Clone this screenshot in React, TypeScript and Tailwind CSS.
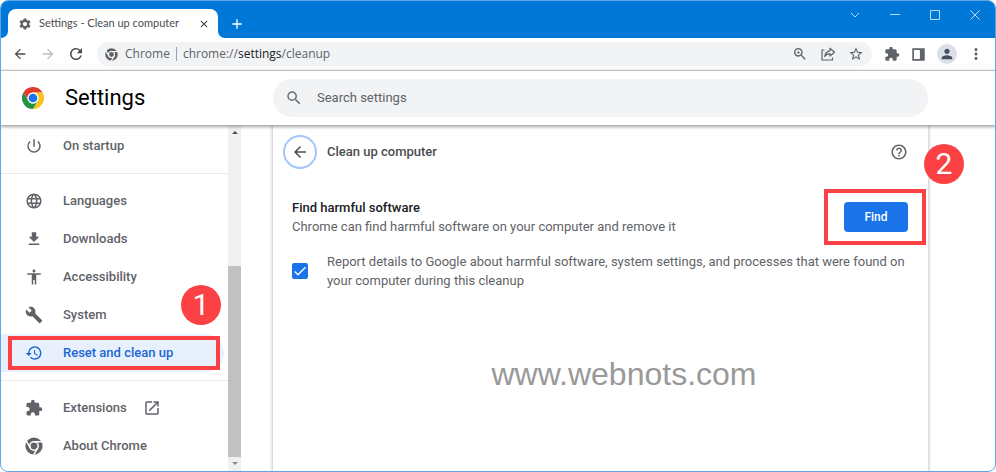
import React from 'react';
import type { IconType } from 'react-icons';
import {
  MdAccessibility,
  MdAdd,
  MdArrowBack,
  MdArrowForward,
  MdBuild,
  MdCheck,
  MdClose,
  MdExtension,
  MdFileDownload,
  MdHelpOutline,
  MdLanguage,
  MdMoreVert,
  MdOpenInNew,
  MdPerson,
  MdPowerSettingsNew,
  MdRefresh,
  MdRestore,
  MdSearch,
  MdSettings,
  MdStarBorder,
  MdZoomIn,
} from 'react-icons/md';

type IconProps = { className?: string };

function ChromeGlyph({ className }: IconProps) {
  return (
    <svg viewBox="0 0 24 24" className={className} aria-hidden="true">
      <circle cx="12" cy="12" r="11.5" fill="currentColor" />
      <circle cx="12" cy="12" r="5.6" fill="none" stroke="#fff" strokeWidth="2" />
      <g stroke="#fff" strokeWidth="2">
        <path d="M12 6.4h11" />
        <path d="M7.2 14.8L1.7 5.3" />
        <path d="M16.8 14.8l-5.5 9.5" />
      </g>
    </svg>
  );
}

function ChromeLogo({ className }: IconProps) {
  return (
    <svg viewBox="0 0 48 48" className={className} aria-hidden="true">
      <circle cx="24" cy="24" r="24" fill="#fff" />
      <path d="M3.2 12A24 24 0 0 1 44.8 12H24a12 12 0 0 0-10.4 18z" fill="#e33b2e" />
      <path d="M44.8 12A24 24 0 0 1 24 48l10.4-18A12 12 0 0 0 24 12z" fill="#fcc31e" />
      <path d="M24 48A24 24 0 0 1 3.2 12l10.4 18a12 12 0 0 0 20.8 0z" fill="#229342" />
      <circle cx="24" cy="24" r="12" fill="#fff" />
      <circle cx="24" cy="24" r="9.5" fill="#1a73e8" />
    </svg>
  );
}

function ShareIcon({ className }: IconProps) {
  return (
    <svg viewBox="0 0 16 16" className={className} fill="none" stroke="currentColor" strokeWidth="1.2" strokeLinejoin="round" aria-hidden="true">
      <path d="M4.5 4H2v10h10.5v-2.5" />
      <path d="M4.8 10.5C5.3 6.8 7 5 10 4.8V2.2L14.5 6.2 10 10V7.6C7.6 7.6 6 8.5 4.8 10.5z" />
    </svg>
  );
}

function SidePanelIcon({ className }: IconProps) {
  return (
    <svg viewBox="0 0 14 14" className={className} aria-hidden="true">
      <path d="M1.2 1.2h11.6v11.6H1.2z" fill="none" stroke="currentColor" strokeWidth="1.8" />
      <path d="M8.5 1H13v12H8.5z" fill="currentColor" />
    </svg>
  );
}

const windowControls = [
  { label: 'Search tabs', path: 'M1 3l4 4 4-4' },
  { label: 'Minimize', path: 'M0 4.5h10' },
  { label: 'Maximize', path: 'M.5.5h9v9h-9z' },
  { label: 'Close', path: 'M.5.5l9 9M9.5.5l-9 9' },
];

function TitleBar() {
  return (
    <div className="flex h-[37px] items-end bg-[#0078d7] pl-[7px]">
      <div className="relative flex h-[29px] w-[210px] items-center rounded-t-lg bg-white pr-2 pl-[10px]">
        <svg viewBox="0 0 7 7" className="absolute bottom-0 -left-[7px] size-[7px]" aria-hidden="true">
          <path d="M7 0v7H0a7 7 0 0 0 7-7z" fill="#fff" />
        </svg>
        <svg viewBox="0 0 7 7" className="absolute -right-[7px] bottom-0 size-[7px]" aria-hidden="true">
          <path d="M0 0v7h7a7 7 0 0 1-7-7z" fill="#fff" />
        </svg>
        <MdSettings className="size-[14px] text-[#5f6368]" />
        <span className="ml-[7px] flex-1 font-[Lato,sans-serif] text-[11px] whitespace-nowrap text-[#4a4d51]">
          Settings - Clean up computer
        </span>
        <button aria-label="Close tab">
          <MdClose className="size-3 text-[#3c4043]" />
        </button>
      </div>
      <button aria-label="New tab" className="mb-[6px] ml-[11px] text-white">
        <MdAdd className="size-4" />
      </button>
      <div className="mb-[18px] ml-auto flex gap-[30px] pr-[15px] text-[#b9dcf8]">
        {windowControls.map(control => (
          <button key={control.label} aria-label={control.label}>
            <svg viewBox="0 0 10 10" className="size-[10px]" fill="none" stroke="currentColor" strokeWidth="1">
              <path d={control.path} />
            </svg>
          </button>
        ))}
      </div>
    </div>
  );
}

function Toolbar() {
  return (
    <div className="flex h-[33px] items-center border-b border-[#dadce0] pr-[10px] pl-[11px] text-[#5f6368]">
      <button aria-label="Back">
        <MdArrowBack className="size-4 text-[#4a4d51]" />
      </button>
      <button aria-label="Forward" className="ml-3">
        <MdArrowForward className="size-4 text-[#babcbe]" />
      </button>
      <button aria-label="Reload" className="ml-[11px]">
        <MdRefresh className="size-[18px] text-[#4a4d51]" />
      </button>
      <div className="ml-3 flex h-6 flex-1 items-center rounded-full bg-[#f1f3f4] pr-2 pl-2 font-['Open_Sans',sans-serif] text-[12px]">
        <ChromeGlyph className="size-[13px]" />
        <span className="ml-[7px]">Chrome</span>
        <span className="mx-[6px] h-[14px] w-px bg-[#9aa0a6]" />
        <span className="flex-1">
          chrome://<span className="text-[#202124]">settings</span>/cleanup
        </span>
        <div className="flex gap-3">
          <button aria-label="Zoom">
            <MdZoomIn className="size-4" />
          </button>
          <button aria-label="Share this page">
            <ShareIcon className="size-4" />
          </button>
          <button aria-label="Bookmark this tab">
            <MdStarBorder className="size-4" />
          </button>
        </div>
      </div>
      <button aria-label="Extensions" className="ml-3">
        <MdExtension className="size-4" />
      </button>
      <button aria-label="Side panel" className="ml-3">
        <SidePanelIcon className="size-[13px]" />
      </button>
      <button aria-label="Profile" className="ml-3 flex size-5 items-center justify-center rounded-full bg-[#dadfe8] text-[#474f63]">
        <MdPerson className="size-4" />
      </button>
      <button aria-label="Menu" className="ml-[10px]">
        <MdMoreVert className="size-[18px]" />
      </button>
    </div>
  );
}

function SettingsHeader() {
  return (
    <header className="relative z-10 flex h-[54px] items-center bg-white pr-[67px] shadow-[0_1px_3px_1px_rgba(0,0,0,0.35)]">
      <div className="flex w-[272px] shrink-0 items-center pl-[21px]">
        <ChromeLogo className="size-[22px]" />
        <h1 className="ml-[21px] text-[22px] leading-8 text-black">Settings</h1>
      </div>
      <label className="flex h-[38px] flex-1 items-center rounded-full bg-[#f1f3f4] pl-3">
        <MdSearch className="size-[18px] text-[#6b6f73]" />
        <input
          type="search"
          aria-label="Search settings"
          placeholder="Search settings"
          className="ml-[14px] flex-1 bg-transparent text-[13px] outline-none placeholder:text-[#5f6368]"
        />
      </label>
    </header>
  );
}

function Badge({ children, className }: { children: React.ReactNode; className: string }) {
  return (
    <span className={`absolute z-20 flex size-10 items-center justify-center rounded-full bg-[#fb4143] text-[30px] leading-none text-white ${className}`}>
      {children}
    </span>
  );
}

type NavItem = { label: string; icon: IconType | typeof ChromeGlyph; active?: boolean; external?: boolean };

const navGroups: NavItem[][] = [
  [{ label: 'On startup', icon: MdPowerSettingsNew }],
  [
    { label: 'Languages', icon: MdLanguage },
    { label: 'Downloads', icon: MdFileDownload },
    { label: 'Accessibility', icon: MdAccessibility },
    { label: 'System', icon: MdBuild },
    { label: 'Reset and clean up', icon: MdRestore, active: true },
  ],
  [
    { label: 'Extensions', icon: MdExtension, external: true },
    { label: 'About Chrome', icon: ChromeGlyph },
  ],
];

function Sidebar() {
  return (
    <aside className="flex w-[240px] shrink-0">
      <nav className="flex-1">
        {navGroups.map((group, i) => (
          <ul key={i} className={i > 0 ? 'mt-2 border-t border-[#e8eaed] pt-2' : 'pt-0.5'}>
            {group.map(({ label, icon: Icon, active, external }) => (
              <li key={label} className="relative">
                <a
                  href="#"
                  className={`mr-1 flex h-[38px] items-center rounded-r-full pl-6 text-[13px] font-medium ${
                    active ? 'bg-[#e8f0fe] text-[#1967d2]' : 'text-[#5f6368]'
                  }`}
                >
                  <Icon className="size-[18px]" />
                  <span className="ml-5">{label}</span>
                  {external && <MdOpenInNew className="ml-4 size-[18px]" />}
                </a>
                {active && (
                  <>
                    <span className="pointer-events-none absolute inset-y-[2px] right-2 left-[7px] border-4 border-[#fb4143]" />
                    <Badge className="right-[7px] bottom-[47px]">1</Badge>
                  </>
                )}
              </li>
            ))}
          </ul>
        ))}
      </nav>
      <div className="flex w-[13px] flex-col items-center bg-[#f1f1f1] py-1">
        <svg viewBox="0 0 6 4" className="mt-px h-1 w-[6px]" aria-hidden="true">
          <path d="M0 4l3-3 3 3z" fill="#505050" />
        </svg>
        <div className="flex w-full flex-1 flex-col justify-end py-[5px]">
          <div className="h-3/5 w-full bg-[#c1c1c1]" />
        </div>
        <svg viewBox="0 0 6 4" className="mb-px h-1 w-[6px]" aria-hidden="true">
          <path d="M0 0l3 3 3-3z" fill="#8a8a8a" />
        </svg>
      </div>
    </aside>
  );
}

function CleanupPanel() {
  return (
    <main className="relative mr-[67px] ml-8 flex-1 bg-white pr-5 pl-[19px] shadow-[0_0_3px_1px_rgba(0,0,0,0.22)]">
      <div className="-ml-[9px] flex items-center pt-[10px]">
        <button aria-label="Back" className="flex size-[34px] items-center justify-center rounded-full border-2 border-[#a5c8fb]">
          <MdArrowBack className="size-[18px] text-[#4a4d51]" />
        </button>
        <h2 className="ml-[10px] flex-1 text-[13px] font-medium text-[#4a4d51]">Clean up computer</h2>
        <button aria-label="Help">
          <MdHelpOutline className="size-[18px] text-[#5f6368]" />
        </button>
      </div>

      <section className="mt-[29px] flex items-center text-[13px] leading-[19px]">
        <div className="flex-1">
          <h3 className="font-medium text-[#202124]">Find harmful software</h3>
          <p className="text-[#5f6368]">Chrome can find harmful software on your computer and remove it</p>
        </div>
        <div className="relative">
          <button className="h-[30px] w-16 rounded-sm bg-[#1a73e8] text-[12px] font-medium text-white">Find</button>
          <span className="pointer-events-none absolute -inset-y-[13px] -right-[18px] -left-5 border-4 border-[#fb4143]" />
        </div>
      </section>

      <label className="mt-4 flex items-center text-[13px] leading-[19px] text-[#5f6368]">
        <span className="relative size-4 shrink-0">
          <input type="checkbox" defaultChecked className="peer block size-4 appearance-none rounded-xs border-2 border-[#5f6368] checked:border-[#1a73e8] checked:bg-[#1a73e8]" />
          <MdCheck className="pointer-events-none absolute inset-0 hidden size-4 text-white peer-checked:block" />
        </span>
        <span className="ml-[19px] max-w-[580px]">
          Report details to Google about harmful software, system settings, and processes that were found on your computer
          during this cleanup
        </span>
      </label>

      <p className="mt-[66px] pl-12 text-center font-['Liberation_Sans',sans-serif] text-[32px] leading-9 text-[#999]">
        www.webnots.com
      </p>
      <Badge className="top-[19px] -right-9">2</Badge>
    </main>
  );
}

export default function App() {
  return (
    <div className="flex min-h-screen flex-col overflow-hidden rounded-lg border border-[#5ea6e8] bg-white font-[Roboto,sans-serif]">
      <TitleBar />
      <Toolbar />
      <SettingsHeader />
      <div className="flex flex-1">
        <Sidebar />
        <CleanupPanel />
      </div>
    </div>
  );
}
